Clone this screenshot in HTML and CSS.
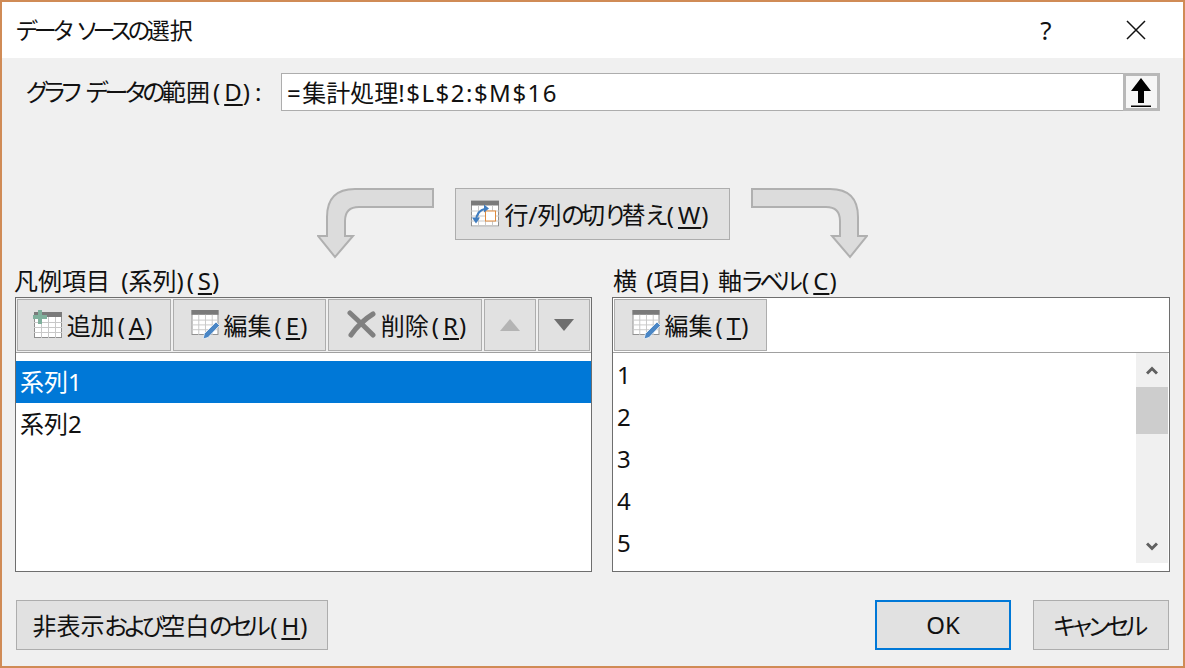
FILE: index.html
```html
<!DOCTYPE html>
<html lang="ja">
<head>
  <meta charset="UTF-8" />
  <title>データ ソースの選択</title>
  <link rel="stylesheet" href="styles.css">
</head>
<body>
  <svg class="defs" width="0" height="0">
    <symbol id="grid" viewBox="0 0 28 26">
      <rect x="0.5" y="0.5" width="27" height="25" fill="#fff" stroke="#8e8e8e" />
      <rect x="0" y="0" width="28" height="5" fill="#7a7a7a" />
      <path d="M0 10.500h28M0 15.500h28M0 20.500h28M7.500 5v21M14.500 5v21M21.500 5v21" stroke="#c8c8c8" fill="none" />
    </symbol>
  </svg>

  <div class="dialog">
    <div class="title-bar">
      <span class="title"><span class="kana">データ ソースの</span>選択</span>
      <span class="help">?</span>
      <svg class="close" width="20" height="20" viewBox="0 0 20 20">
        <path d="M1 1l18 18M19 1L1 19" stroke="#111" stroke-width="1.5" fill="none" />
      </svg>
    </div>

    <div class="content">
      <div class="range-row">
        <label class="range-label"><span class="kana">グラフ データの</span>範囲<span class="key">(<u>D</u>)</span><span class="colon">:</span></label>
        <div class="range-input">
          <span class="range-value">=<span class="kanji">集計処理</span>!$L$2:$M$16</span>
          <button class="range-btn">
            <svg width="20" height="29" viewBox="0 0 20 29">
              <path d="M10 0L20 13H13V25H7V13H0Z" fill="#000" />
              <rect x="0" y="27.500" width="20" height="1.500" fill="#000" />
            </svg>
          </button>
        </div>
      </div>

      <div class="swap-row">
        <svg class="swap-arrow" width="118" height="72" viewBox="0 0 118 72">
          <path d="M116 2V20H42Q28 20 28 34V49H36L18 70L1 49H10V30Q10 2 38 2Z" fill="#dcdcdc" stroke="#b0b0b0" stroke-width="2" />
        </svg>
        <button class="btn swap-btn">
          <svg class="icon" width="28" height="27" viewBox="0 0 28 26">
            <use href="#grid" />
            <rect x="14.500" y="10.500" width="10" height="10" fill="#fff" stroke="#e08a3c" />
            <path d="M5 21Q5 10 15 8" stroke="#3f7cbf" stroke-width="2" fill="none" />
            <path d="M13 4l5 4-5 4zM1 17h8l-4 6z" fill="#3f7cbf" />
          </svg>
          <span>行/列<span class="kana">の</span>切<span class="kana">り</span>替<span class="kana">え</span><span class="key">(<u>W</u>)</span></span>
        </button>
        <svg class="swap-arrow" width="118" height="72" viewBox="0 0 118 72">
          <path d="M2 2V20H76Q90 20 90 34V49H82L100 70L117 49H108V30Q108 2 80 2Z" fill="#dcdcdc" stroke="#b0b0b0" stroke-width="2" />
        </svg>
      </div>

      <div class="panels">
        <div class="panel panel-left">
          <div class="panel-label">凡例項目 (系列)<span class="key">(<u>S</u>)</span></div>
          <div class="panel-box">
            <div class="toolbar">
              <button class="btn tool-btn tool-wide">
                <svg class="icon" width="30" height="28" viewBox="0 0 30 28">
                  <use href="#grid" x="2" y="2" width="28" height="26" />
                  <path d="M6 0h4v5h5v4h-5v5H6V9H1V5h5z" fill="#7fb09c" />
                </svg>
                <span>追加<span class="key">(<u>A</u>)</span></span>
              </button>
              <button class="btn tool-btn tool-mid">
                <svg class="icon" width="30" height="29" viewBox="0 0 30 29">
                  <use href="#grid" width="28" height="25" />
                  <path d="M12 29l1.500-5.500L25 12l3.500 3.500L17 27.500z" fill="#4a86c5" stroke="#fff" stroke-width="0.700" />
                </svg>
                <span>編集<span class="key">(<u>E</u>)</span></span>
              </button>
              <button class="btn tool-btn tool-wide tool-del">
                <svg class="icon" width="29" height="28" viewBox="0 0 29 28">
                  <path d="M3 3Q14 13 26 25M26 4Q13 12 4 25" stroke="#808080" stroke-width="5" stroke-linecap="round" fill="none" />
                </svg>
                <span>削除<span class="key">(<u>R</u>)</span></span>
              </button>
              <button class="btn tool-btn tool-small">
                <svg width="20" height="12" viewBox="0 0 20 12"><path d="M10 0l10 12H0z" fill="#b4b4b4" /></svg>
              </button>
              <button class="btn tool-btn tool-small">
                <svg width="20" height="12" viewBox="0 0 20 12"><path d="M0 0h20L10 12z" fill="#6e6e6e" /></svg>
              </button>
            </div>
            <ul class="series-list">
              <li class="series-item selected">系列1</li>
              <li class="series-item">系列2</li>
            </ul>
          </div>
        </div>

        <div class="panel panel-right">
          <div class="panel-label">横 (項目) 軸<span class="kana">ラベル</span><span class="key">(<u>C</u>)</span></div>
          <div class="panel-box">
            <div class="toolbar">
              <button class="btn tool-btn tool-mid">
                <svg class="icon" width="30" height="29" viewBox="0 0 30 29">
                  <use href="#grid" width="28" height="25" />
                  <path d="M12 29l1.500-5.500L25 12l3.500 3.500L17 27.500z" fill="#4a86c5" stroke="#fff" stroke-width="0.700" />
                </svg>
                <span>編集<span class="key">(<u>T</u>)</span></span>
              </button>
            </div>
            <div class="axis-area">
              <ul class="axis-list">
                <li>1</li>
                <li>2</li>
                <li>3</li>
                <li>4</li>
                <li>5</li>
              </ul>
              <div class="scrollbar">
                <div class="scroll-arrow">
                  <svg width="12" height="9" viewBox="0 0 12 9"><path d="M1 7.500l5-5 5 5" stroke="#606060" stroke-width="3" fill="none" /></svg>
                </div>
                <div class="scroll-thumb"></div>
                <div class="scroll-track"></div>
                <div class="scroll-arrow">
                  <svg width="12" height="9" viewBox="0 0 12 9"><path d="M1 1.500l5 5 5-5" stroke="#606060" stroke-width="3" fill="none" /></svg>
                </div>
              </div>
            </div>
          </div>
        </div>
      </div>

      <div class="footer">
        <button class="btn hidden-btn"><span>非表示<span class="kana">および</span>空白<span class="kana">のセル</span><span class="key">(<u>H</u>)</span></span></button>
        <div class="footer-right">
          <button class="btn action-btn default-btn">OK</button>
          <button class="btn action-btn cancel-btn"><span class="kana">キャンセル</span></button>
        </div>
      </div>
    </div>
  </div>
</body>
</html>
```

FILE: styles.css
```css
* {
  box-sizing: border-box;
}

html,
body {
  margin: 0;
  padding: 0;
}

body {
  font-family: "Noto Sans", "Noto Sans CJK JP", sans-serif;
  font-size: 24px;
  font-feature-settings: "palt";
  color: #111;
  background: #f0f0f0;
}

u {
  text-underline-offset: 3px;
}

.defs {
  position: absolute;
}

/* the kana and the brackets of the original font set differently from Noto */
.kana {
  letter-spacing: -3.500px;
  word-spacing: 5px;
}

.key {
  letter-spacing: 4px;
  margin-left: 3px;
}

.key u {
  letter-spacing: 1px;
}

.dialog {
  width: 1185px;
  height: 668px;
  border: 2px solid #d08b56;
  background: #f0f0f0;
  display: flex;
  flex-direction: column;
  overflow: hidden;
}

.title-bar {
  height: 56px;
  background: #fff;
  display: flex;
  align-items: center;
  padding-left: 14px;
  flex-shrink: 0;
}

.title {
  font-size: 23px;
  flex: 1;
  padding-bottom: 3px;
}

.help {
  width: 30px;
  margin-right: 65px;
  text-align: center;
  font-size: 26px;
}

.close {
  margin-right: 37px;
}

.content {
  padding: 15px 13px 0;
  flex: 1;
  display: flex;
  flex-direction: column;
}

.range-row {
  display: flex;
  align-items: center;
  height: 38px;
}

.range-label {
  width: 266px;
  padding-left: 11px;
  padding-bottom: 3px;
}

.colon {
  margin-left: 1px;
}

.range-input {
  width: 879px;
  height: 38px;
  background: #fff;
  border: 1px solid #adadad;
  display: flex;
  align-items: center;
  justify-content: space-between;
}

.range-value {
  padding-left: 5px;
  padding-bottom: 2px;
  letter-spacing: 1.500px;
}

.kanji {
  letter-spacing: 0;
}

.range-btn {
  width: 37px;
  height: 38px;
  margin: 0 -1px 0 0;
  padding: 0 2px 0 0;
  background: #f6f6f6;
  border: 3px solid #b8b8b8;
  display: flex;
  align-items: center;
  justify-content: center;
}

.swap-row {
  display: flex;
  justify-content: center;
  margin-top: 76px;
  height: 70px;
  gap: 20px;
  padding-right: 1px;
}

.swap-arrow {
  flex-shrink: 0;
}

.btn {
  font: inherit;
  font-feature-settings: inherit;
  color: inherit;
  background: #e1e1e1;
  border: 1px solid #adadad;
  padding: 0 0 2px;
  display: flex;
  align-items: center;
  justify-content: center;
  white-space: nowrap;
}

.icon {
  flex-shrink: 0;
  margin-right: 5px;
}

.swap-btn {
  width: 275px;
  height: 52px;
  margin-top: 1px;
}

.panels {
  display: flex;
  gap: 20px;
  margin-top: 11px;
}

.panel-left {
  width: 577px;
}

.panel-right {
  width: 558px;
}

.panel-label {
  height: 29px;
  line-height: 25px;
  padding-left: 1px;
  word-spacing: 3px;
}

.panel-left .panel-label {
  padding-left: 0;
  text-indent: -1px;
  word-spacing: 5px;
}

.panel-box {
  height: 275px;
  background: #fff;
  border: 1px solid #6e6e6e;
  display: flex;
  flex-direction: column;
}

.toolbar {
  display: flex;
  gap: 2px;
  padding: 1px;
  height: 55px;
  border-bottom: 1px solid #a0a0a0;
  flex-shrink: 0;
  background: #fff;
}

.panel-left .toolbar {
  background: #f0f0f0;
}

.tool-btn {
  height: 52px;
}

.tool-wide {
  width: 154px;
}

.tool-mid {
  width: 153px;
  padding-left: 3px;
}

.tool-mid .icon {
  margin-right: 3px;
}

.tool-del {
  padding-left: 7px;
}

.tool-small {
  width: 52px;
  padding-bottom: 0;
}

.series-list,
.axis-list {
  list-style: none;
  margin: 0;
  padding: 0;
}

.series-list {
  padding-top: 8px;
}

.series-item {
  height: 42px;
  line-height: 42px;
  padding-left: 4px;
}

.series-item.selected {
  background: #0078d7;
  color: #fff;
}

.axis-area {
  flex: 1;
  display: flex;
  min-height: 0;
}

.axis-list {
  flex: 1;
  padding: 1px 0 0 4px;
}

.axis-list li {
  height: 42px;
  line-height: 42px;
}

.scrollbar {
  width: 32px;
  height: 210px;
  margin-right: 1px;
  background: #f0f0f0;
  display: flex;
  flex-direction: column;
}

.scroll-arrow {
  height: 34px;
  display: flex;
  align-items: center;
  justify-content: center;
}

.scroll-thumb {
  height: 47px;
  background: #cdcdcd;
}

.scroll-track {
  flex: 1;
}

.footer {
  display: flex;
  justify-content: space-between;
  margin-top: 28px;
  padding-left: 1px;
}

.footer-right {
  display: flex;
  gap: 22px;
  padding-right: 1px;
}

.hidden-btn {
  width: 312px;
  height: 50px;
}

.action-btn {
  width: 136px;
  height: 50px;
}

.cancel-btn {
  padding-right: 4px;
}

.default-btn {
  border: 2px solid #0078d7;
}
```
